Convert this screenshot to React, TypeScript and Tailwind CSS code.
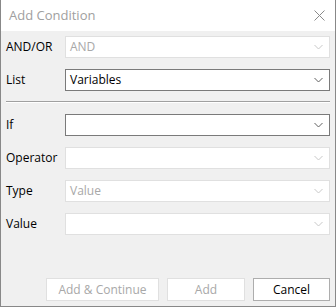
import React from 'react';

const Chevron: React.FC<{ disabled?: boolean }> = ({ disabled }) => (
  <svg width="9" height="6" viewBox="0 0 9 6" className="shrink-0">
    <path d="M0.5 1 L4.5 5 L8.5 1" fill="none" stroke={disabled ? '#c8c8c8' : '#606060'} strokeWidth="1" />
  </svg>
);

const Select: React.FC<{ value?: string; disabled?: boolean }> = ({ value, disabled }) => (
  <div
    className={`flex-1 h-[22px] flex items-center justify-between pl-[4px] pr-[6px] bg-white border ${
      disabled ? 'border-[#e0e0e0] text-[#a8a8a8]' : 'border-[#7a7a7a] text-black'
    }`}
  >
    <span className="leading-none">{value}</span>
    <Chevron disabled={disabled} />
  </div>
);

const Row: React.FC<{ label: string; value?: string; disabled?: boolean }> = ({ label, value, disabled }) => (
  <div className="flex items-center h-[22px]">
    <div className="w-[59px] shrink-0 text-black">{label}</div>
    <Select value={value} disabled={disabled} />
  </div>
);

const App: React.FC = () => {
  return (
    <div className="w-[336px] h-[307px] flex flex-col bg-[#f0f0f0] border-x border-b border-[#888888] font-['Segoe_UI','Open_Sans',sans-serif] text-[12px]">
      {/* Title bar */}
      <div className="h-[31px] shrink-0 bg-white flex items-center justify-between pl-[8px] pr-[10px]">
        <span className="text-[13px] text-[#a0a0a0]">Add Condition</span>
        <svg width="11" height="11" viewBox="0 0 11 11">
          <path d="M0.5 0.5 L10.5 10.5 M10.5 0.5 L0.5 10.5" stroke="#8a8a8a" strokeWidth="1" />
        </svg>
      </div>

      {/* Body */}
      <div className="flex-1 flex flex-col px-[5px] pt-[5px] pb-[5px]">
        <div className="flex flex-col gap-[11px]">
          <Row label="AND/OR" value="AND" disabled />
          <Row label="List" value="Variables" />
        </div>

        <div className="mt-[10px] mb-[11px] border-t border-[#a0a0a0] border-b border-b-white" />

        <div className="flex flex-col gap-[11px]">
          <Row label="If" />
          <Row label="Operator" disabled />
          <Row label="Type" value="Value" disabled />
          <Row label="Value" disabled />
        </div>

        <div className="mt-auto flex justify-end gap-[8px]">
          <button className="w-[113px] h-[23px] bg-white border border-[#e0e0e0] text-[#a8a8a8]">Add &amp; Continue</button>
          <button className="w-[78px] h-[23px] bg-white border border-[#e0e0e0] text-[#a8a8a8]">Add</button>
          <button className="w-[77px] h-[23px] bg-white border border-[#adadad] text-black">Cancel</button>
        </div>
      </div>
    </div>
  );
};

export default App;
